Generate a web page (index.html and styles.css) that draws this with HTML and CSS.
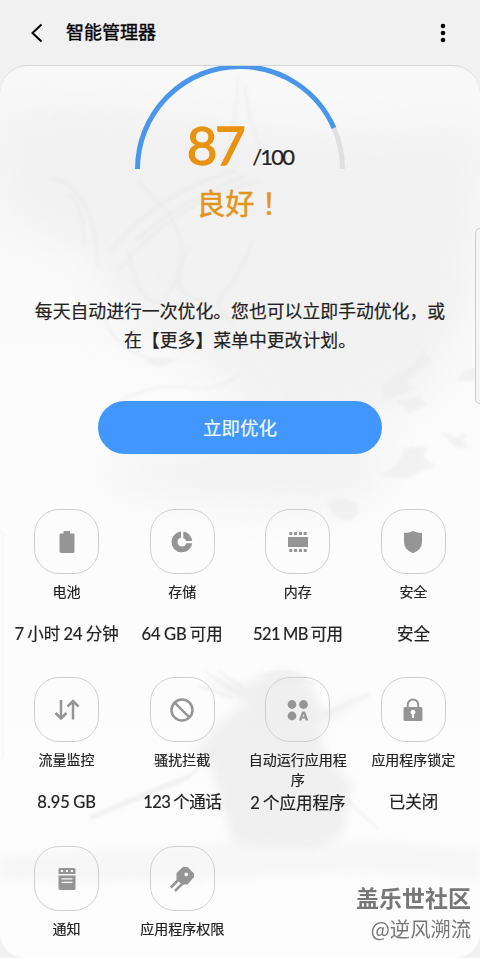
FILE: index.html
```html
<!DOCTYPE html>
<html lang="zh-CN">
<head>
<meta charset="utf-8">
<title>智能管理器</title>
<link rel="stylesheet" href="styles.css">
</head>
<body>
<div class="screen">
  <header class="bar">
    <svg class="back" viewBox="0 0 14 20"><path d="M11.500 1.500 2.500 10l9 8.500"/></svg>
    <h1 class="title">智能管理器</h1>
    <svg class="more" viewBox="0 0 6 20"><circle cx="3" cy="3" r="2.3"/><circle cx="3" cy="10" r="2.3"/><circle cx="3" cy="17" r="2.3"/></svg>
  </header>
  <main class="card">
    <svg class="scenery" viewBox="0 0 480 892" preserveAspectRatio="none">
      <defs>
        <filter id="soft" x="-30%" y="-30%" width="160%" height="160%"><feGaussianBlur stdDeviation="20"/></filter>
        <filter id="fine" x="-20%" y="-20%" width="140%" height="140%"><feGaussianBlur stdDeviation="1.6"/></filter>
        <filter id="mist" x="-20%" y="-20%" width="140%" height="140%"><feGaussianBlur stdDeviation="5"/></filter>
      </defs>
      <g filter="url(#soft)" fill="#ebebeb" opacity=".55">
        <path d="M0 50Q120 40 240 60T480 60V180Q400 220 330 190L240 200Q120 220 0 140Z"/>
        <path d="M80 160Q240 80 420 150L480 220 430 320Q330 400 250 370 230 290 120 260Z"/>
        <path d="M110 400Q260 350 400 390L360 440Q230 450 110 420Z"/>
      </g>
      <g filter="url(#fine)" fill="none" stroke="#e3e3e3" stroke-width="2" opacity=".45">
        <path d="M238 10Q236 70 222 95M245 20Q250 70 268 90"/>
        <path d="M50 112Q95 120 98 200M68 128Q85 140 84 180M110 185Q160 125 235 105M118 205Q180 130 260 115M135 175Q180 135 245 110"/>
        <path d="M138 115L168 145Q195 190 170 225T128 185M105 250Q110 280 155 295M190 180Q160 230 205 235M252 175Q240 210 225 225T235 260"/>
        <path d="M120 335Q160 315 190 322 220 325 240 308"/>
      </g>
      <g filter="url(#fine)" fill="#ebebeb" opacity=".55">
        <path d="M145 295q15-7 35-2l-15 7q-15 0-20-5ZM382 318l30-20 12-15 8 12-15 12-12 7 10 9-32 12ZM455 315l10-12 15-2v14ZM395 335l25-5 8 9-20 8ZM442 366l12 5 13-3-4 8 8 5-15 2ZM380 410l15-11 10-17 22-2-3 12 12 8-30 12ZM327 436q15-8 30 2 5 15-10 17-16-2-20-19Z"/>
      </g>
      <g filter="url(#mist)" fill="#ebebeb" opacity=".75">
        <path d="m205 615 38 4 28-12q25-4 40 14l12 26 50-22-54 36 5 24 28 35-10 48-27 14-80-4-13-38-10-40-20-10 30-36 25-17Z"/>
        <path d="M0 790q100-5 220-12t260 5v30q-120-10-240-2T0 815Z" opacity=".45"/>
      </g>
      <g filter="url(#fine)" stroke="#e6e6e6" fill="none" opacity=".55">
        <path d="M90 752 190 710" stroke-width="5"/><path d="M190 710 215 685M345 732 378 763M325 648 370 628" stroke-width="2"/>
        <path d="M205 605l35 24M218 605l25 17M198 620l35 12M260 610q30-8 45 2M275 618q25-7 40 0" stroke-width="2"/>
      </g>
    </svg>

    <section class="score">
      <svg class="gauge" viewBox="0 0 210 103">
        <path class="track" d="M2.500 103A102.500 102.500 0 0 1 207.500 103" pathLength="100"/>
        <path class="fill" d="M2.500 103A102.500 102.500 0 0 1 207.500 103" pathLength="100"/>
      </svg>
      <p class="points"><b>87</b><span>/100</span></p>
      <p class="grade">良好<span lang="zh-TW">！</span></p>
    </section>

    <p class="note">每天自动进行一次优化。您也可以立即手动优化，或<br>在【更多】菜单中更改计划。</p>
    <button class="optimize">立即优化</button>

    <section class="grid">
      <div class="item">
        <div class="tile"><svg viewBox="0 0 30 30"><path d="M11.500 4h6.500v2.500h3.200q1.300 0 1.300 1.300v16.500q0 1.700-1.700 1.700H9.200q-1.700 0-1.700-1.700V7.800Q7.500 6.500 8.800 6.500h2.700Z"/></svg></div>
        <p class="label">电池</p><p class="value">7 小时 24 分钟</p>
      </div>
      <div class="item">
        <div class="tile"><svg viewBox="0 0 30 30"><path d="M14 4.600A10.400 10.400 0 1 0 25.200 16.300H19.200A4.400 4.400 0 1 1 14 10.800ZM16.300 4.600A10.400 10.400 0 0 1 25.200 14H19.200A4.400 4.400 0 0 0 16.300 10.900Z"/></svg></div>
        <p class="label">存储</p><p class="value">64 GB 可用</p>
      </div>
      <div class="item">
        <div class="tile"><svg viewBox="0 0 30 30"><path d="M5 10h20v10H5ZM6.300 5h3v3h-3Zm4.800 0h3v3h-3Zm4.800 0h3v3h-3Zm4.800 0h3v3h-3ZM6.300 22h3v3h-3Zm4.800 0h3v3h-3Zm4.800 0h3v3h-3Zm4.800 0h3v3h-3Z"/></svg></div>
        <p class="label">内存</p><p class="value tight">521 MB 可用</p>
      </div>
      <div class="item">
        <div class="tile"><svg viewBox="0 0 30 30"><path d="M15 4q4 2 9 2V15q0 7.500-9 11.300Q6 22.500 6 15V6Q11 6 15 4Z"/></svg></div>
        <p class="label">安全</p><p class="value">安全</p>
      </div>
      <div class="item">
        <div class="tile"><svg viewBox="0 0 30 30" class="line"><path d="M9 5v18.500M3.500 18l5.500 5.500 5.500-5.500M21 24.500V6M15.500 11.500 21 6l5.500 5.500"/></svg></div>
        <p class="label">流量监控</p><p class="value">8.95 GB</p>
      </div>
      <div class="item">
        <div class="tile"><svg viewBox="0 0 30 30" class="line"><circle cx="15" cy="15" r="10.500"/><path d="m7.600 7.600 14.800 14.800"/></svg></div>
        <p class="label">骚扰拦截</p><p class="value tight">123 个通话</p>
      </div>
      <div class="item">
        <div class="tile"><svg viewBox="0 0 30 30"><circle cx="9" cy="9.500" r="4.400"/><circle cx="20.500" cy="9.500" r="4.400"/><circle cx="9" cy="21" r="4.400"/><path fill-rule="evenodd" d="M19.200 16.500h2.800l3.300 9h-2.600l-.6-1.900h-3l-.6 1.900h-2.600Zm1.300 2.700-.9 2.500h1.900Z"/></svg></div>
        <p class="label">自动运行应用程序</p><p class="value low">2 个应用程序</p>
      </div>
      <div class="item">
        <div class="tile"><svg viewBox="0 0 30 30"><path fill-rule="evenodd" d="M8.700 12v-2.200a6.300 6.300 0 0 1 12.600 0V12h1.700q1.500 0 1.500 1.500v11q0 1.500-1.500 1.500H7q-1.500 0-1.500-1.500v-11Q5.500 12 7 12Zm2 0h8.600v-2.200a4.300 4.300 0 0 0-8.600 0ZM14 19.500v3.500h2v-3.500a2.500 2.500 0 1 0-2 0Z"/></svg></div>
        <p class="label">应用程序锁定</p><p class="value">已关闭</p>
      </div>
      <div class="item">
        <div class="tile"><svg viewBox="0 0 30 30"><path fill-rule="evenodd" d="M8 4h14q1.500 0 1.500 1.500V10h-17V5.500Q6.500 4 8 4Zm.8 2v2H11V6Zm5 0v2H16V6Zm5 0v2H21V6ZM6.500 11.500h17v13q0 1.500-1.500 1.500H8q-1.500 0-1.500-1.500Zm3 2.700v1.300h11v-1.300Zm0 3.600v1.300h11v-1.300Z"/></svg></div>
        <p class="label">通知</p>
      </div>
      <div class="item">
        <div class="tile"><svg viewBox="0 0 30 30"><path fill-rule="evenodd" d="M16 3h4.500L27 9.500V13l-6.500 7.500H15l-5.500-5V9Zm3.200 5.500a1.900 1.900 0 1 0 .1 3.800 1.900 1.900 0 0 0-.1-3.800Z"/><path class="prong" d="m3.800 23.500 9-9M8 27l9-9"/></svg></div>
        <p class="label">应用程序权限</p>
      </div>
    </section>
    <div class="watermark"><b>盖乐世社区</b><span>@逆风溯流</span></div>
  </main>
  <div class="edge edge-right"></div>
  <div class="edge edge-left"></div>
</div>
</body>
</html>
```

FILE: styles.css
```css
* { box-sizing: border-box; }
body, h1, p { margin: 0; }
body {
  background: #f1f1f1;
  color: #222;
  font-family: Lato, "Noto Sans CJK SC", sans-serif;
}
.screen { position: relative; width: 480px; height: 958px; overflow: hidden; }
.bar { display: flex; align-items: center; height: 65px; padding: 0 34px 0 30px; }
.back { width: 14px; height: 20px; fill: none; stroke: #000; stroke-width: 2; }
.title {
  flex: 1;
  margin-left: 22px;
  color: #000;
  font-size: 18px;
  font-weight: 400;
  line-height: 22px;
  padding-bottom: 2px;
  -webkit-text-stroke: .4px;
}
.more { width: 6px; height: 20px; fill: #000; }
.card {
  position: relative;
  height: 893px;
  border: 1px solid #d8d8d8;
  border-width: 1px 0 0;
  border-radius: 28px 28px 25px 25px;
  background: linear-gradient(#f8f8f8, #fcfcfc 50%, #fdfdfd);
  overflow: hidden;
}
.scenery { position: absolute; inset: 0; width: 100%; height: 100%; }
.score, .note, .optimize, .grid { position: relative; }
.score { display: flex; flex-direction: column; align-items: center; height: 231px; }
.gauge { display: block; flex: none; width: 210px; height: 103px; }
.gauge path { fill: none; stroke-width: 5; }
.gauge .track { stroke: #e0e0e0; stroke-dasharray: 0 86.900 14; }
.gauge .fill { stroke: #4a96ea; stroke-dasharray: 86.900 100; }
.points { display: flex; align-items: baseline; height: 60px; margin-top: -54px; line-height: 60px; }
.points b { color: #e89312; font-size: 53px; font-weight: 400; letter-spacing: -2.500px; -webkit-text-stroke: 1.300px; }
.points span { margin-left: 9px; font-size: 22px; letter-spacing: -1.800px; -webkit-text-stroke: .2px; }
.grade {
  height: 40px;
  margin: 7px 0 0;
  color: #e2951c;
  font-family: "Noto Sans CJK SC", sans-serif;
  font-size: 29px;
  line-height: 40px;
  -webkit-text-stroke: .5px;
}
.grade span { font-family: "Noto Sans CJK TC", sans-serif; }
.note { font-size: 17.850px; line-height: 29px; text-align: center; white-space: nowrap; -webkit-text-stroke: .2px; }
.optimize {
  display: block;
  width: 284px;
  height: 53px;
  margin: 46px auto 0 98px;
  padding: 0;
  border: 0;
  border-radius: 27px;
  background: #4297ff;
  color: #f2fbff;
  font: 18.500px/52px Lato, "Noto Sans CJK SC", sans-serif;
  -webkit-text-stroke: .2px;
}
.grid {
  display: grid;
  grid-template-columns: repeat(4, 115.600px);
  grid-template-rows: 168px 169px 100px;
  margin: 55px 0 0 8.800px;
}
.item { display: flex; flex-direction: column; align-items: center; text-align: center; }
.tile {
  display: grid;
  place-items: center;
  width: 65px;
  height: 65px;
  flex: none;
  border: 1px solid #cecece;
  border-radius: 25px;
}
.tile svg { width: 30px; height: 30px; fill: #959595; }
.tile .line { fill: none; stroke: #959595; stroke-width: 2.500; }
.tile .prong { fill: none; stroke: #959595; stroke-width: 2.500; }
.label { width: 104px; min-height: 40px; margin-top: 8px; font-size: 14px; line-height: 20px; -webkit-text-stroke: .2px; }
.value { font-size: 16.500px; line-height: 24px; white-space: nowrap; word-spacing: -1px; -webkit-text-stroke: .2px; }
.value.tight { letter-spacing: -.5px; }
.value.low { padding-top: 1px; }
.watermark {
  position: absolute;
  right: 9px;
  bottom: 14px;
  display: flex;
  flex-direction: column;
  align-items: flex-end;
  color: #777;
  font-family: "Noto Sans CJK SC", sans-serif;
  line-height: 31px;
  text-shadow: 0 0 2px #fff;
}
.watermark b { font-size: 23px; }
.watermark span { font-size: 20.300px; }
.edge { position: absolute; border: 1px solid #ccc; background: #f5f5f5; }
.edge-right { top: 228px; right: -8px; width: 13px; height: 176px; border-radius: 5px; }
.edge-left { top: 530px; left: -4px; width: 8px; height: 230px; border-color: #f6f6f6; border-radius: 4px; background: #fbfbfb; }
```
